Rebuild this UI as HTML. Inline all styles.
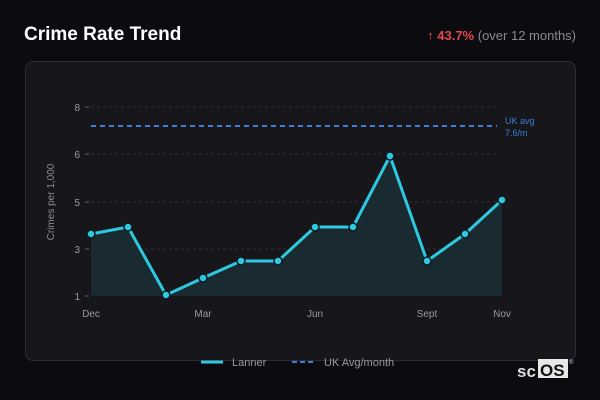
<!DOCTYPE html>
<html><head><style>
body{margin:0;width:600px;height:400px;background:#0c0b10;font-family:"Liberation Sans",sans-serif;position:relative;overflow:hidden}
.t{position:absolute;left:24px;top:24px;color:#fff;font-weight:bold;font-size:19px}
.r{position:absolute;right:24px;top:28px;font-size:13px;color:#8a8a90}
.r b{color:#e5484d}
.card{position:absolute;left:25px;top:61px;width:549px;height:298px;background:#17171b;border:1px solid #2c2c32;border-radius:8px}
svg{position:absolute;left:0;top:0}
</style></head><body>
<div class="t">Crime Rate Trend</div>
<div class="r"><b>↑ 43.7%</b> (over 12 months)</div>
<div class="card"></div>
<svg width="600" height="400" font-family="Liberation Sans, sans-serif">
<g stroke="#2e2e34" stroke-dasharray="3,3" stroke-width="1">
<line x1="91" x2="497" y1="107" y2="107"/><line x1="91" x2="497" y1="154" y2="154"/><line x1="91" x2="497" y1="202" y2="202"/><line x1="91" x2="497" y1="249" y2="249"/>
</g>
<g stroke="#666" stroke-width="1"><line x1="85" x2="89" y1="107" y2="107"/><line x1="85" x2="89" y1="154" y2="154"/><line x1="85" x2="89" y1="202" y2="202"/><line x1="85" x2="89" y1="249" y2="249"/><line x1="85" x2="89" y1="296" y2="296"/></g>
<g fill="#9a9aa0" font-size="10" text-anchor="end"><text x="80" y="111">8</text><text x="80" y="158">6</text><text x="80" y="206">5</text><text x="80" y="253">3</text><text x="80" y="300">1</text></g>
<text transform="translate(54,202) rotate(-90)" fill="#8a8a90" font-size="10" text-anchor="middle">Crimes per 1,000</text>
<line x1="91" x2="497" y1="126" y2="126" stroke="#3b7dd8" stroke-width="2" stroke-dasharray="5,4"/>
<text x="505" y="124" fill="#3b7dd8" font-size="9">UK avg</text><text x="505" y="136" fill="#3b7dd8" font-size="9">7.6/m</text>
<polygon fill="#1a2c33" opacity="0.9" points="91,296 91,234 128,227 166,295 203,278 241,261 278,261 315,227 353,227 390,156 427,261 465,234 502,200 502,296"/>
<polyline fill="none" stroke="#2ec8e0" stroke-width="3" stroke-linejoin="round" points="91,234 128,227 166,295 203,278 241,261 278,261 315,227 353,227 390,156 427,261 465,234 502,200"/>
<g fill="#2ec8e0" stroke="#0c1a1f" stroke-width="1.5">
<circle cx="91" cy="234" r="4"/><circle cx="128" cy="227" r="4"/><circle cx="166" cy="295" r="4"/><circle cx="203" cy="278" r="4"/><circle cx="241" cy="261" r="4"/><circle cx="278" cy="261" r="4"/><circle cx="315" cy="227" r="4"/><circle cx="353" cy="227" r="4"/><circle cx="390" cy="156" r="4"/><circle cx="427" cy="261" r="4"/><circle cx="465" cy="234" r="4"/><circle cx="502" cy="200" r="4"/>
</g>
<g fill="#9a9aa0" font-size="10" text-anchor="middle"><text x="91" y="317">Dec</text><text x="203" y="317">Mar</text><text x="315" y="317">Jun</text><text x="427" y="317">Sept</text><text x="502" y="317">Nov</text></g>
<line x1="201" x2="223" y1="362" y2="362" stroke="#2ec8e0" stroke-width="3"/>
<text x="232" y="366" fill="#9a9aa0" font-size="11">Lanner</text>
<line x1="292" x2="316" y1="362" y2="362" stroke="#3b7dd8" stroke-width="2" stroke-dasharray="5,3"/>
<text x="324" y="366" fill="#9a9aa0" font-size="11">UK Avg/month</text>
<text x="517" y="377" fill="#ddd" font-size="17" font-weight="bold">sc</text>
<rect x="538" y="359" width="30" height="19" fill="#e8e8e8"/>
<text x="540" y="376" fill="#111" font-size="17" font-weight="bold">OS</text>
<text x="569" y="364" fill="#ccc" font-size="6">®</text>
</svg>
</body></html>
